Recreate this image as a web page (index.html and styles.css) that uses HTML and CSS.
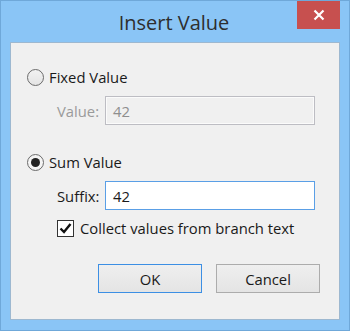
FILE: index.html
```html
<!DOCTYPE html>
<html>
<head>
<meta charset="utf-8">
<link rel="stylesheet" href="styles.css">
</head>
<body>
<div class="window">
  <div class="titlebar">
    <div class="title">Insert Value</div>
    <div class="close">
      <svg width="12" height="12" viewBox="0 0 12 12"><path d="M1.5 1.5 L10.5 10.5 M10.5 1.5 L1.5 10.5" stroke="#fff" stroke-width="2.2" fill="none"/></svg>
    </div>
  </div>
  <div class="client">
    <div class="row radio-row first">
      <span class="radio"></span>
      <span class="label">Fixed Value</span>
    </div>
    <div class="row field-row disabled gap-sm">
      <span class="field-label">Value:</span>
      <div class="input input-disabled">42</div>
    </div>
    <div class="row radio-row gap-lg">
      <span class="radio checked"><span class="dot"></span></span>
      <span class="label">Sum Value</span>
    </div>
    <div class="row field-row gap-sm">
      <span class="field-label">Suffix:</span>
      <div class="input input-focus">42</div>
    </div>
    <div class="row check-row">
      <span class="check">
        <svg width="15" height="15" viewBox="0 0 15 15"><path d="M2.5 7.5 L6 11 L12.5 3" stroke="#111" stroke-width="2.4" fill="none"/></svg>
      </span>
      <span class="label">Collect values from branch text</span>
    </div>
    <div class="buttons">
      <div class="btn btn-default">OK</div>
      <div class="btn">Cancel</div>
    </div>
  </div>
</div>
</body>
</html>
```
FILE: styles.css
```css
* { box-sizing: border-box; }
html, body { margin: 0; padding: 0; }
body {
  width: 350px;
  height: 331px;
  overflow: hidden;
  font-family: "Open Sans", "DejaVu Sans", sans-serif;
}
.window {
  width: 350px;
  height: 331px;
  background: #8ac5f6;
  border: 1px solid #6fa8d9;
  display: flex;
  flex-direction: column;
}
.titlebar {
  height: 41px;
  position: relative;
  display: flex;
  align-items: center;
  justify-content: center;
}
.title {
  font-size: 20px;
  color: #2e2e2e;
  margin-top: 2px;
  margin-left: -2px;
}
.close {
  position: absolute;
  top: 0;
  right: 9px;
  width: 43px;
  height: 28px;
  background: #c7504f;
  display: flex;
  align-items: center;
  justify-content: center;
}
.close svg { display: block; }
.client {
  margin: 0 9px;
  height: 278px;
  background: #f0f0f0;
  border: 1px solid #9db8d0;
  display: flex;
  flex-direction: column;
  font-size: 14.8px;
  color: #1a1a1a;
}
.row {
  display: flex;
  align-items: center;
}
.radio-row { height: 20px; padding-left: 16px; }
.first { margin-top: 24px; }
.gap-sm { margin-top: 9px; }
.gap-lg { margin-top: 27px; }
.radio {
  width: 17px;
  height: 17px;
  border-radius: 50%;
  border: 1px solid #6b6b6b;
  background: linear-gradient(#f2f2f2, #e4e4e4);
  display: flex;
  align-items: center;
  justify-content: center;
  margin-right: 5px;
}
.radio.checked { background: #f4f4f4; }
.dot {
  width: 9px;
  height: 9px;
  border-radius: 50%;
  background: #222;
}
.field-row { height: 29px; padding-left: 46px; }
.field-label { width: 48px; }
.disabled .field-label { color: #9a9a9a; }
.input {
  width: 210px;
  height: 29px;
  padding-left: 7px;
  display: flex;
  align-items: center;
}
.input-disabled {
  border: 1px solid #bdbdc3;
  box-shadow: inset 0 0 0 1px #fbfbfb;
  background: #f0f0f0;
  color: #8e8e8e;
}
.input-focus {
  border: 1px solid #5a9fe6;
  background: #fff;
  color: #1a1a1a;
}
.check-row { height: 20px; padding-left: 46px; margin-top: 8px; }
.check {
  width: 17px;
  height: 17px;
  border: 1px solid #333;
  background: #fff;
  display: flex;
  align-items: center;
  justify-content: center;
  margin-right: 6px;
}
.check svg { display: block; }
.buttons {
  display: flex;
  justify-content: flex-end;
  gap: 14px;
  padding-right: 19px;
  margin-top: 26px;
}
.btn {
  width: 104px;
  height: 29px;
  border: 1px solid #acacac;
  background: linear-gradient(#efefef, #e4e4e4);
  display: flex;
  align-items: center;
  justify-content: center;
  color: #1a1a1a;
}
.btn-default {
  border: 1px solid #3c8fe4;
}
```
